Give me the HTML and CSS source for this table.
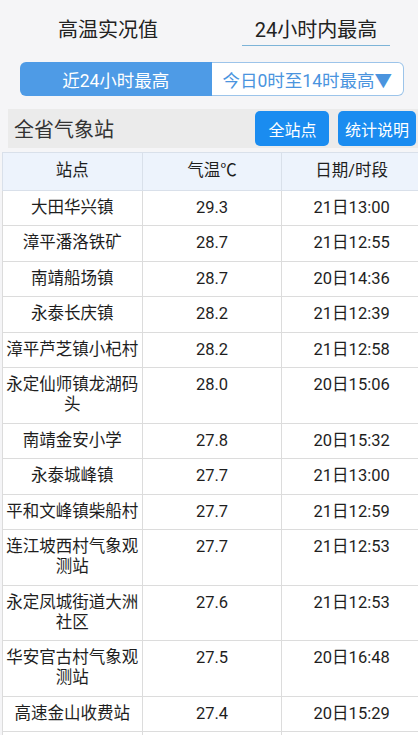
FILE: index.html
```html
<!DOCTYPE html>
<html lang="zh">
<head>
<meta charset="utf-8">
<link rel="stylesheet" href="styles.css">
</head>
<body>
<div class="tabs">
  <div class="tab tab-first">高温实况值</div>
  <div class="tab tab-active">24小时内最高</div>
</div>
<div class="segment">
  <div class="seg seg-on">近24小时最高</div>
  <div class="seg seg-off">今日0时至14时最高▼</div>
</div>
<div class="bar">
  <div class="bar-title">全省气象站</div>
  <div class="btns">
    <div class="btn">全站点</div>
    <div class="btn">统计说明</div>
  </div>
</div>
<table class="data">
  <thead>
    <tr><th>站点</th><th>气温℃</th><th>日期/时段</th></tr>
  </thead>
  <tbody>
    <tr><td>大田华兴镇</td><td>29.3</td><td>21日13:00</td></tr>
    <tr><td>漳平潘洛铁矿</td><td>28.7</td><td>21日12:55</td></tr>
    <tr><td>南靖船场镇</td><td>28.7</td><td>20日14:36</td></tr>
    <tr><td>永泰长庆镇</td><td>28.2</td><td>21日12:39</td></tr>
    <tr><td>漳平芦芝镇小杞村</td><td>28.2</td><td>21日12:58</td></tr>
    <tr><td>永定仙师镇龙湖码头</td><td>28.0</td><td>20日15:06</td></tr>
    <tr><td>南靖金安小学</td><td>27.8</td><td>20日15:32</td></tr>
    <tr><td>永泰城峰镇</td><td>27.7</td><td>21日13:00</td></tr>
    <tr><td>平和文峰镇柴船村</td><td>27.7</td><td>21日12:59</td></tr>
    <tr><td>连江坡西村气象观测站</td><td>27.7</td><td>21日12:53</td></tr>
    <tr><td>永定凤城街道大洲社区</td><td>27.6</td><td>21日12:53</td></tr>
    <tr><td>华安官古村气象观测站</td><td>27.5</td><td>20日16:48</td></tr>
    <tr><td>高速金山收费站</td><td>27.4</td><td>20日15:29</td></tr>
    <tr class="empty"><td></td><td></td><td></td></tr>
  </tbody>
</table>
</body>
</html>
```

FILE: styles.css
```css
html, body {
  margin: 0;
  padding: 0;
}
body {
  background: #f5f5f7;
  font-family: Roboto, "Noto Sans CJK SC", sans-serif;
  color: #222;
  overflow: hidden;
  width: 418px;
  height: 735px;
}
.tabs {
  display: flex;
  padding-left: 8px;
  gap: 34px;
}
.tab {
  font-size: 20px;
  line-height: 24px;
  padding-top: 18px;
  padding-bottom: 3px;
  text-align: center;
  color: #222;
}
.tab-first {
  width: 200px;
}
.tab-active {
  width: 148px;
  border-bottom: 1.5px solid #7db4d8;
}
.segment {
  display: flex;
  margin: 16px 0 0 20px;
  width: 384px;
  height: 34px;
}
.seg {
  flex: 1;
  display: flex;
  align-items: center;
  justify-content: center;
  font-size: 17.5px;
  box-sizing: border-box;
}
.seg-on {
  background: #4e9be6;
  color: #fff;
  border-radius: 6px 0 0 6px;
}
.seg-off {
  background: #fff;
  color: #4a94de;
  border: 1px solid #9cc4ea;
  border-left: none;
  border-radius: 0 6px 6px 0;
}
.bar {
  display: flex;
  align-items: center;
  justify-content: space-between;
  margin: 13px 0 0 8px;
  height: 39px;
  background: #ebebeb;
  padding-right: 2px;
}
.bar-title {
  font-size: 20px;
  color: #333;
  padding-left: 6px;
}
.btns {
  display: flex;
  gap: 8.5px;
}
.btn {
  min-width: 74px;
  height: 35px;
  padding: 0 7px;
  box-sizing: border-box;
  display: flex;
  align-items: center;
  justify-content: center;
  background: #1a8cf0;
  color: #fff;
  font-size: 16px;
  border-radius: 5px;
}
.data {
  margin: 4px 0 0 2px;
  width: 420px;
  table-layout: fixed;
  border-collapse: collapse;
  background: #fff;
}
.data th, .data td {
  border: 1px solid #dcdcdc;
  text-align: center;
  vertical-align: top;
  font-size: 16.5px;
  line-height: 20px;
  padding: 7.25px 3px;
  font-weight: normal;
  color: #1e1e1e;
}
.data th {
  background: #edf3fc;
  padding: 8.3px 3px;
  border-color: #d9e0ea;
}
.data .empty td {
  height: 20px;
}
```
